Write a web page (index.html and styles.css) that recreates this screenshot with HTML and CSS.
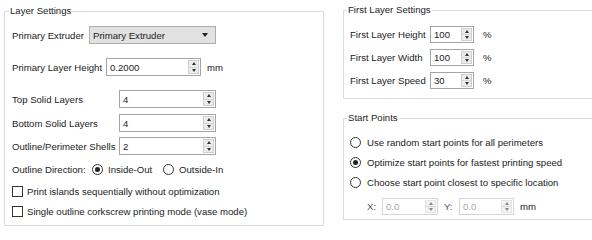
FILE: index.html
```html
<!DOCTYPE html>
<html lang="en">
<head>
    <meta charset="UTF-8">
    <title>Layer Settings</title>
    <link rel="stylesheet" href="styles.css">
</head>
<body>
    <div class="page">
        <fieldset class="group group-layer">
            <legend>Layer Settings</legend>
            <div class="row first">
                <span class="label w77">Primary Extruder</span>
                <div class="select">
                    <span>Primary Extruder</span>
                    <span class="caret"></span>
                </div>
            </div>
            <div class="row spaced">
                <span class="label w94">Primary Layer Height</span>
                <div class="spin w95">
                    <span class="val">0.2000</span>
                    <span class="btns"><i class="up"></i><i class="down"></i></span>
                </div>
                <span class="unit">mm</span>
            </div>
            <div class="row spaced">
                <span class="label w107">Top Solid Layers</span>
                <div class="spin w97">
                    <span class="val">4</span>
                    <span class="btns"><i class="up"></i><i class="down"></i></span>
                </div>
            </div>
            <div class="row near">
                <span class="label w107">Bottom Solid Layers</span>
                <div class="spin w97">
                    <span class="val">4</span>
                    <span class="btns"><i class="up"></i><i class="down"></i></span>
                </div>
            </div>
            <div class="row">
                <span class="label w107">Outline/Perimeter Shells</span>
                <div class="spin w97">
                    <span class="val">2</span>
                    <span class="btns"><i class="up"></i><i class="down"></i></span>
                </div>
            </div>
            <div class="row">
                <span class="label w80">Outline Direction:</span>
                <span class="option w71"><span class="radio checked"></span>Inside-Out</span>
                <span class="option"><span class="radio"></span>Outside-In</span>
            </div>
            <div class="row check-row">
                <span class="check"></span>Print islands sequentially without optimization
            </div>
            <div class="row check-row tight">
                <span class="check"></span>Single outline corkscrew printing mode (vase mode)
            </div>
        </fieldset>

        <div class="side">
            <fieldset class="group group-first">
                <legend>First Layer Settings</legend>
                <div class="row small first">
                    <span class="label w80">First Layer Height</span>
                    <div class="spin small w44">
                        <span class="val">100</span>
                        <span class="btns"><i class="up"></i><i class="down"></i></span>
                    </div>
                    <span class="unit pct">%</span>
                </div>
                <div class="row small">
                    <span class="label w80">First Layer Width</span>
                    <div class="spin small w44">
                        <span class="val">100</span>
                        <span class="btns"><i class="up"></i><i class="down"></i></span>
                    </div>
                    <span class="unit pct">%</span>
                </div>
                <div class="row small">
                    <span class="label w80">First Layer Speed</span>
                    <div class="spin small w44">
                        <span class="val">30</span>
                        <span class="btns"><i class="up"></i><i class="down"></i></span>
                    </div>
                    <span class="unit pct">%</span>
                </div>
            </fieldset>

            <fieldset class="group group-start">
                <legend>Start Points</legend>
                <div class="row radio-row first">
                    <span class="radio"></span>Use random start points for all perimeters
                </div>
                <div class="row radio-row">
                    <span class="radio checked"></span>Optimize start points for fastest printing speed
                </div>
                <div class="row radio-row">
                    <span class="radio"></span>Choose start point closest to specific location
                </div>
                <div class="row small xy-row">
                    <span class="label coord">X:</span>
                    <div class="spin small disabled w56">
                        <span class="val">0.0</span>
                        <span class="btns"><i class="up"></i><i class="down"></i></span>
                    </div>
                    <span class="label coord gap6">Y:</span>
                    <div class="spin small disabled w55">
                        <span class="val">0.0</span>
                        <span class="btns"><i class="up"></i><i class="down"></i></span>
                    </div>
                    <span class="unit">mm</span>
                </div>
            </fieldset>
        </div>
    </div>
</body>
</html>
```

FILE: styles.css
```css
body {
    margin: 0;
    font-family: "Liberation Sans", Arial, sans-serif;
    font-size: 9.6px;
    color: #222;
    background-color: #fff;
    overflow: hidden;
}

.page {
    box-sizing: border-box;
    display: flex;
    align-items: flex-start;
    gap: 19px;
    padding: 5px 0 0 4px;
    width: 592px;
    height: 240px;
    overflow: hidden;
}

.side {
    display: flex;
    flex-direction: column;
    flex: none;
    margin-top: -1px;
}

.group {
    box-sizing: border-box;
    margin: 0;
    border: 1px solid #dcdcdc;
    padding: 0 6px 0 6px;
    min-width: 0;
    flex: none;
}

.group legend {
    padding: 0 1px;
    margin-left: -3px;
    line-height: 12px;
}

.group-layer {
    width: 320px;
    height: 221px;
    padding-left: 7px;
}

.group-first {
    width: 260px;
    height: 95px;
}

.group-start {
    width: 260px;
    height: 108px;
    margin-top: 13px;
}

.row {
    display: flex;
    align-items: center;
    height: 18px;
    margin-top: 5px;
    white-space: nowrap;
}

.row.first { margin-top: 9px; }
.row.spaced { margin-top: 14px; }
.row.near { margin-top: 6px; }
.row.check-row { height: 16px; }
.row.tight { margin-top: 4px; }

.row.small { height: 17px; margin-top: 6px; }
.group-first .row.first { margin-top: 10px; }

.row.radio-row { height: 14px; margin-top: 6px; }
.group-start .row.first { margin-top: 11px; }
.row.xy-row { margin-top: 9px; }

.label { flex: none; }
.w77 { width: 77px; }
.w80 { width: 80px; }
.w94 { width: 94px; }
.w107 { width: 107px; }
.w71 { width: 71px; }
.w44 { width: 44px; }
.w55 { width: 55px; }
.w56 { width: 56px; }
.w95 { width: 95px; }
.w97 { width: 97px; }

.coord {
    width: 15px;
    padding-left: 17px;
    color: #555;
}

.coord.gap6 { padding-left: 6px; }

.unit { margin-left: 6px; }
.unit.pct { margin-left: 9px; }

/* drop down */
.select {
    box-sizing: border-box;
    display: flex;
    align-items: center;
    justify-content: space-between;
    width: 127px;
    height: 18px;
    padding: 0 7px 0 3px;
    background-color: #e1e1e1;
    border: 1px solid #adadad;
}

.caret {
    width: 0;
    height: 0;
    border-left: 3.5px solid transparent;
    border-right: 3.5px solid transparent;
    border-top: 4px solid #222;
}

/* spin boxes */
.spin {
    box-sizing: border-box;
    display: flex;
    height: 18px;
    border: 1px solid #a5a5a5;
    background-color: #fff;
}

.spin.small { height: 17px; }

.spin .val {
    flex: 1;
    padding-left: 3px;
    display: flex;
    align-items: center;
}

.spin .btns {
    box-sizing: border-box;
    width: 11px;
    margin: 1px;
    border: 1px solid #cfcfcf;
    background-color: #ececec;
    display: flex;
    flex-direction: column;
}

.spin .btns i {
    flex: 1;
    display: flex;
    align-items: center;
    justify-content: center;
}

.spin .btns i + i { border-top: 1px solid #d6d6d6; }

.spin .btns i::before {
    content: "";
    width: 0;
    height: 0;
    border-left: 2.5px solid transparent;
    border-right: 2.5px solid transparent;
}

.spin .btns .up::before { border-bottom: 3px solid #333; }
.spin .btns .down::before { border-top: 3px solid #333; }

.spin.disabled {
    border-color: #d4d4d4;
    color: #a8a8a8;
}

.spin.disabled .btns {
    border-color: #e4e4e4;
    background-color: #f2f2f2;
}

.spin.disabled .btns .up::before { border-bottom-color: #888; }
.spin.disabled .btns .down::before { border-top-color: #888; }

/* radios and checks */
.option {
    display: inline-flex;
    align-items: center;
    flex: none;
}

.radio {
    box-sizing: border-box;
    width: 11px;
    height: 11px;
    border: 1px solid #333;
    border-radius: 50%;
    background-color: #fff;
    margin-right: 5px;
    flex: none;
    display: flex;
    align-items: center;
    justify-content: center;
}

.radio.checked::after {
    content: "";
    width: 5px;
    height: 5px;
    border-radius: 50%;
    background-color: #222;
}

.radio-row .radio { margin-right: 6px; }

.check {
    box-sizing: border-box;
    width: 11px;
    height: 11px;
    border: 1px solid #333;
    background-color: #fff;
    margin-right: 4px;
    flex: none;
}
```
